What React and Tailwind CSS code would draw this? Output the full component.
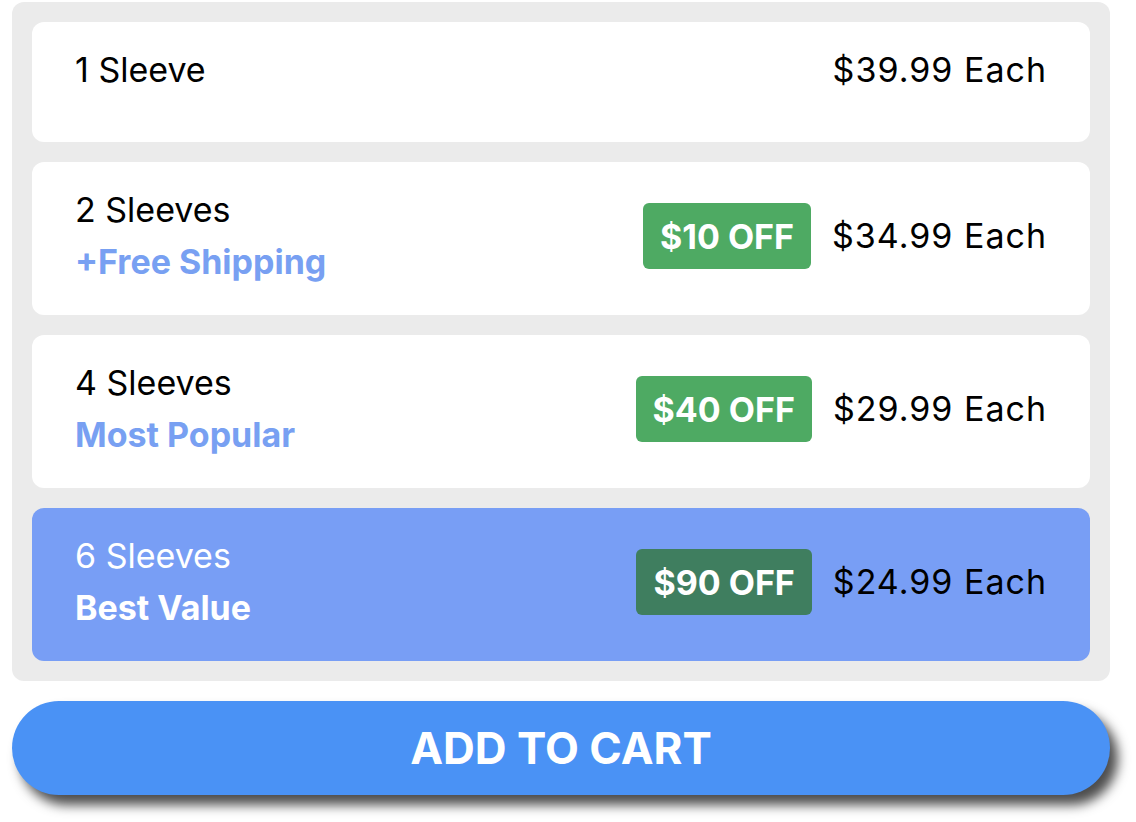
import React from "react";

const options = [
  { title: "1 Sleeve", sub: null, badge: null, price: "$39.99 Each" },
  { title: "2 Sleeves", sub: "+Free Shipping", badge: "$10 OFF", price: "$34.99 Each" },
  { title: "4 Sleeves", sub: "Most Popular", badge: "$40 OFF", price: "$29.99 Each" },
  { title: "6 Sleeves", sub: "Best Value", badge: "$90 OFF", price: "$24.99 Each", selected: true },
];

export default function App() {
  return (
    <div
      className="w-[1136px] h-[822px] bg-white pl-[12px] pt-[2px]"
      style={{ fontFamily: "Inter, 'Noto Sans', sans-serif" }}
    >
      <div className="w-[1098px] flex flex-col gap-[20px]">
        <div className="bg-[#ebebeb] rounded-[12px] p-[20px] flex flex-col gap-[20px]">
          {options.map((o) => (
            <div
              key={o.title}
              className={
                o.selected
                  ? "bg-[#789ef5] rounded-[12px] min-h-[120px] pt-[24px] pb-[29px] px-[43px]"
                  : "bg-white rounded-[12px] min-h-[120px] pt-[24px] pb-[29px] px-[43px]"
              }
            >
              <div className="flex items-center justify-between">
                <div className="flex flex-col gap-[4px]">
                  <div
                    className={
                      o.selected
                        ? "text-[34px] leading-[48px] text-white"
                        : "text-[34px] leading-[48px] text-black"
                    }
                  >
                    {o.title}
                  </div>
                  {o.sub && (
                    <div
                      className={
                        o.selected
                          ? "text-[34px] leading-[48px] font-bold text-white"
                          : "text-[34px] leading-[48px] font-bold text-[#78a0f2]"
                      }
                    >
                      {o.sub}
                    </div>
                  )}
                </div>
                <div className="flex items-center gap-[21px]">
                  {o.badge && (
                    <div
                      className={
                        o.selected
                          ? "h-[66px] px-[17px] rounded-[6px] bg-[#3f7e5f] text-white font-bold text-[34px] flex items-center"
                          : "h-[66px] px-[17px] rounded-[6px] bg-[#4eaa63] text-white font-bold text-[34px] flex items-center"
                      }
                    >
                      {o.badge}
                    </div>
                  )}
                  <div className="text-[34px] leading-[48px] tracking-[1px] text-black">{o.price}</div>
                </div>
              </div>
            </div>
          ))}
        </div>
        <button className="h-[94px] w-full rounded-full bg-[#4a92f5] text-white font-bold text-[44px] shadow-[8px_10px_12px_rgba(0,0,0,0.7)]">
          ADD TO CART
        </button>
      </div>
    </div>
  );
}
